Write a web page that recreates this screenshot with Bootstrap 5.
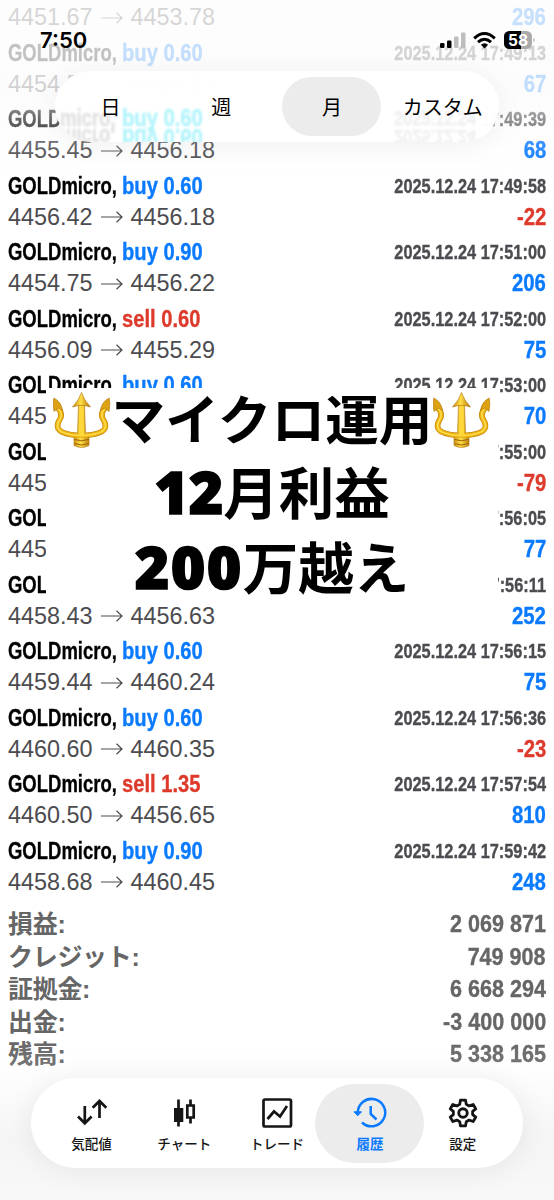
<!DOCTYPE html>
<html lang="ja">
<head>
<meta charset="utf-8">
<meta name="viewport" content="width=device-width, initial-scale=1">
<title>履歴</title>
<link href="https://cdn.jsdelivr.net/npm/bootstrap@5.3.0/dist/css/bootstrap.min.css" rel="stylesheet">
<script src="https://cdn.jsdelivr.net/npm/bootstrap@5.3.0/dist/js/bootstrap.bundle.min.js"></script>
<style>
body{font-family:"Liberation Sans","Noto Sans CJK JP",sans-serif;background:#fff;color:#000}
.phone{width:554px;height:1200px}
/* Condensed bold: Liberation Sans Bold squeezed, strokes thickened back */
.cond{font-weight:700;-webkit-text-stroke:.35px currentColor}
.deals{padding:2.2px 8px 0}
.deal{height:66.5px}
.first{height:35.5px}
.ln{height:31px;line-height:31px;white-space:nowrap}
.ln.head{line-height:30px}
.fit{display:inline-block;transform-origin:0 50%}
.fit-r{display:inline-block;transform-origin:100% 50%}
.sym{font-size:24px;width:114px;transform:scaleX(.77)}
.side{font-size:24px;transform:scaleX(.84)}
.when{font-size:19.5px;color:#4b4b50;transform:scaleX(.838)}
.price{font-size:23.4px;color:#4c4c50}
.price svg{margin:-3px 8px 0 8px}
.gain{font-size:24.5px;transform:scaleX(.83);line-height:30px}
.up{color:#0a7aff}.dn{color:#de3a2c}
.totals{padding:6px 8px 0;color:#666;font-size:24.5px}
.tot{height:32.5px;line-height:32.5px}
.tot .k{font-weight:600;font-size:25px;-webkit-text-stroke:0;line-height:32px;letter-spacing:-.3px}
.tot .v{transform:scaleX(.88)}
.fade-top{height:190px;background:linear-gradient(rgba(253,253,253,.78) 0,rgba(251,251,251,.76) 90px,rgba(250,250,250,.42) 118px,rgba(250,250,250,.12) 150px,rgba(255,255,255,0) 185px)}
.fade-bot{height:160px;background:linear-gradient(rgba(247,247,247,0),rgba(246,246,246,.12) 30px,rgba(245,245,245,1) 100px,#f8f8f8)}
.clock{left:40px;top:27px;font:600 22px/27px Inter,sans-serif}
.status{left:439px;top:29px}
.seg{left:55px;top:71px;width:444px;height:71px;border-radius:36px;background:rgba(255,255,255,.975);box-shadow:0 4px 28px rgba(0,0,0,.06);overflow:hidden;font:20px/30px "Noto Sans CJK JP",sans-serif}
.seg .opt{width:110.8px;z-index:2}
.seg .opt span{width:99px;height:59px;border-radius:30px}
.seg .opt .on{background:#ececec}
.ghost{left:0;top:32px;width:444px;height:31px;font-family:"Liberation Sans",sans-serif;line-height:30px;filter:blur(1px);-webkit-box-reflect:below -13px linear-gradient(#000 79%,transparent 80%)}
.ghost .a{left:5px;width:auto;color:#e2e2e2}.ghost .b{left:67px;color:#b0f4fb}.ghost .c{left:339px;color:#f0f0f3;transform-origin:0 50%}
.cover{left:46px;top:388px;width:452px;height:212px;background:#fff}
.cover .big{height:74.5px;font:700 55.5px/74px "Noto Sans CJK JP",sans-serif;white-space:nowrap;position:relative;top:-9px}
.cover .big.t1{font-size:53.7px;top:-8px}
.t1 svg{margin-top:7px}
.cover .num{font-family:"Open Sans",sans-serif;font-weight:800;font-size:59px;-webkit-text-stroke:1.5px #000}
.cover .num.wide{letter-spacing:1.500px}
.tabs{left:31px;top:1078px;width:492px;height:90px;border-radius:45px;background:#fff;box-shadow:0 2px 30px rgba(0,0,0,.07);padding:0 14px;font:500 13.5px/18px "Noto Sans CJK JP",sans-serif;color:#151515}
.tab{width:92.8px}
.tab>div{width:109px;height:79px;margin:0 -8px;border-radius:40px;padding-top:12px}
.tab svg{margin-bottom:4px}
.tab .on{background:#ececec;color:#0a7aff;font-weight:700}
</style>
</head>
<body>
<main class="phone position-relative overflow-hidden">
  <section id="deals" class="deals d-flex flex-column"></section>
  <section id="totals" class="totals cond"></section>

  <div class="cover position-absolute d-flex flex-column align-items-center">
    <div class="big t1 d-flex align-items-center"><svg width="58" height="58" viewBox="0 0 58 58"><use href="#trident"/></svg><span>マイクロ運用</span><svg width="58" height="58" viewBox="0 0 58 58"><use href="#trident"/></svg></div>
    <div class="big"><span class="num">12</span><span>月利益</span></div>
    <div class="big"><span class="num wide">200</span><span>万越え</span></div>
  </div>

  <div class="fade-top position-absolute top-0 start-0 w-100"></div>
  <div class="fade-bot position-absolute bottom-0 start-0 w-100"></div>

  <div class="clock position-absolute">7:50</div>
  <svg class="status position-absolute" width="100" height="24" viewBox="0 0 100 24">
    <rect x="1" y="14" width="4.5" height="5" rx="1.2"/><rect x="8" y="11.500" width="4.500" height="7.500" rx="1.2"/>
    <g fill="#bdbdbd"><rect x="15" y="7.500" width="4.500" height="11.500" rx="1.2"/><rect x="22" y="3.500" width="4.500" height="15.500" rx="1.2"/></g>
    <g fill="none" stroke="#000" stroke-width="3"><path d="M35.200 9.300Q45.500-.2 55.800 9.300M39 13.200Q45.500 7.200 52 13.200"/></g><path d="M45.500 19.500L41.900 15.700Q45.500 12.600 49.100 15.700Z"/>
    <rect x="65" y="2" width="28" height="18" rx="5.500" fill="#aaa"/><path d="M70.500 2H82V20H70.500A5.500 5.500 0 0 1 65 14.500V7.500A5.500 5.500 0 0 1 70.500 2Z"/><path d="M94.500 8.500Q97 11 94.500 13.500Z" fill="#aaa"/>
    <text x="79" y="16.500" text-anchor="middle" font-family="Inter" font-weight="700" font-size="15.500" fill="#fff">58</text>
  </svg>

  <nav class="seg position-absolute d-flex align-items-center">
    <div class="ghost cond position-absolute" aria-hidden="true"><span class="fit sym a position-absolute text-nowrap">micro,</span><span class="fit side b position-absolute text-nowrap">buy 0.60</span><span class="when c position-absolute text-nowrap">2025.12.24</span></div>
    <div class="opt d-flex justify-content-center"><span class="d-flex align-items-center justify-content-center">日</span></div>
    <div class="opt d-flex justify-content-center"><span class="d-flex align-items-center justify-content-center">週</span></div>
    <div class="opt d-flex justify-content-center"><span class="on d-flex align-items-center justify-content-center">月</span></div>
    <div class="opt d-flex justify-content-center"><span class="d-flex align-items-center justify-content-center">カスタム</span></div>
  </nav>

  <nav class="tabs position-absolute d-flex align-items-center">
    <div class="tab"><div class="d-flex flex-column align-items-center"><svg width="34" height="34" viewBox="0 0 34 34" fill="none" stroke="currentColor" stroke-width="2.700"><path d="M9.800 10V27M3 20.500L9.800 27.300L16.600 20.500M24.500 22V5M17.700 11.800L24.500 5L31.300 11.800"/></svg><span>気配値</span></div></div>
    <div class="tab"><div class="d-flex flex-column align-items-center"><svg width="34" height="34" viewBox="0 0 34 34" fill="none" stroke="currentColor" stroke-width="2.700"><path d="M11.500 3.500V30.500M23.500 3.500V9M23.500 22V27.500"/><path fill="currentColor" stroke="none" d="M7 12H16.300V26H7Z"/><path d="M20.300 9.500H26.700V21.500H20.300Z"/></svg><span>チャート</span></div></div>
    <div class="tab"><div class="d-flex flex-column align-items-center"><svg width="34" height="34" viewBox="0 0 34 34" fill="none" stroke="currentColor" stroke-width="2.700"><rect x="3.500" y="3.500" width="27.500" height="27" rx="1.500"/><path d="M7.500 23L14 15.500L20 20.500L27 10"/></svg><span>トレード</span></div></div>
    <div class="tab"><div class="on d-flex flex-column align-items-center"><svg width="34" height="34" viewBox="0 0 34 34" fill="none" stroke="currentColor" stroke-width="2.500"><path d="M4.800 17A13.700 13.700 0 1 1 9 26.500M17.700 10V18L23.500 23.500"/><path d="M1 15.800H8.500L4.700 19.800Z" fill="currentColor" stroke-width="1"/></svg><span>履歴</span></div></div>
    <div class="tab"><div class="d-flex flex-column align-items-center"><svg width="34" height="34" viewBox="0 0 24 24" fill="none" stroke="currentColor" stroke-width="2" stroke-linejoin="round"><path d="M10.200 2.900H13.800L14.300 5.900L16.300 7L19.200 6L21 9.100L18.800 10.900V13.100L21 14.900L19.200 18L16.300 17L14.300 18.100L13.800 21.100H10.200L9.700 18.100L7.700 17L4.800 18L3 14.900L5.200 13.100V10.900L3 9.100L4.800 6L7.700 7L9.700 5.900Z"/><circle cx="12" cy="12" r="3"/></svg><span>設定</span></div></div>
  </nav>

  <svg width="0" height="0" class="position-absolute">
    <defs>
      <linearGradient id="gold" gradientUnits="userSpaceOnUse" x1="20" x2="37" y1="0" y2="0"><stop offset="0" stop-color="#c98a0c"/><stop offset=".45" stop-color="#ffdf48"/><stop offset="1" stop-color="#b87808"/></linearGradient>
      <path id="fork" fill="none" stroke-linecap="round" d="M5 16Q10.500 22 6.500 28Q1.500 36 9 40Q17 43.500 28.500 43.500Q40 43.500 48 40Q55.500 36 50.500 28Q46.500 22 52 16"/>
      <g id="trident">
        <use href="#fork" stroke="#b87c0a" stroke-width="5.600"/>
        <path fill="url(#gold)" stroke="#b0740a" stroke-width=".6" d="M25.500 13H31.500L32.500 41L36 46V53.500Q28.500 57.500 21 53.500V46L24.500 41Z"/>
        <use href="#fork" stroke="#edb014" stroke-width="4.600"/>
        <use href="#fork" stroke="#fddb45" stroke-width="1.800"/>
        <path fill="#ffd93c" d="M26.500 13H30.500L31 43H26Z"/>
        <path fill="url(#gold)" stroke="#b0740a" stroke-width=".6" d="M28.500 .5Q31 8 37.500 15L31.500 13.500H25.500L19.500 15Q26 8 28.500 .5Z"/>
        <path fill="#dca214" stroke="#b0740a" stroke-width=".6" d="M.8 6Q8 9.500 9.500 18L5 16L1 19.500Q-.5 12 .8 6ZM56.200 6Q49 9.500 47.500 18L52 16L56 19.500Q57.500 12 56.200 6Z"/>
        <path fill="none" stroke="#9c6204" stroke-width="1" d="M21.500 47.500Q28.500 50 35.500 47.500M21.500 51.500Q28.500 54.500 35.500 51.500"/>
      </g>
    </defs>
  </svg>
</main>
<script>
const deals=[
 ['buy 0.60','17:49:13','4454.50','4454.31',67],['buy 0.60','17:49:39','4455.45','4456.18',68],
 ['buy 0.60','17:49:58','4456.42','4456.18',-22],['buy 0.90','17:51:00','4454.75','4456.22',206],
 ['sell 0.60','17:52:00','4456.09','4455.29',75],['buy 0.60','17:53:00','4455.48','4456.25',70],
 ['buy 0.60','17:55:00','4455.70','4454.62',-79],['buy 0.60','17:56:05','4455.90','4457.10',77],
 ['buy 0.60','17:56:11','4458.43','4456.63',252],['buy 0.60','17:56:15','4459.44','4460.24',75],
 ['buy 0.60','17:56:36','4460.60','4460.35',-23],['sell 1.35','17:57:54','4460.50','4456.65',810],
 ['buy 0.90','17:59:42','4458.68','4460.45',248]];
const arrow='<svg width="22" height="16" viewBox="0 0 22 16" fill="none" stroke="currentColor" stroke-width="1.200"><path d="M0 8H21M15.500 2.800L21 8L15.500 13.200"/></svg>';
const priceLine=(a,b,g)=>`<div class="ln d-flex justify-content-between"><span class="price">${a}${arrow}${b}</span><span class="gain fit-r cond ${g<0?'dn':'up'}">${g}</span></div>`;
document.getElementById('deals').innerHTML=`<div class="first">${priceLine('4451.67','4453.78',296)}</div>`+
 deals.map(([s,t,a,b,g])=>`<div class="deal"><div class="ln head cond d-flex justify-content-between"><span><span class="fit sym">GOLDmicro,</span><span class="fit side ${s[0]=='b'?'up':'dn'}">${s}</span></span><span class="when fit-r">2025.12.24 ${t}</span></div>${priceLine(a,b,g)}</div>`).join('');
document.getElementById('totals').innerHTML=[['損益:','2 069 871'],['クレジット:','749 908'],['証拠金:','6 668 294'],['出金:','-3 400 000'],['残高:','5 338 165']]
 .map(([k,v])=>`<div class="tot d-flex justify-content-between"><span class="k">${k}</span><span class="v fit-r">${v}</span></div>`).join('');
</script>
</body>
</html>
